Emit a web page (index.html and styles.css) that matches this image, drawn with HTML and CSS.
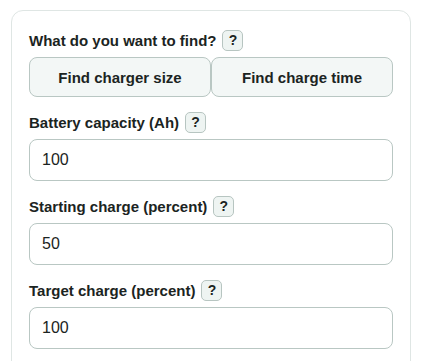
FILE: index.html
```html
<!DOCTYPE html>
<html lang="en">
  <head>
    <meta charset="UTF-8" />
    <meta name="viewport" content="width=device-width, initial-scale=1.0" />
    <title>Battery charger calculator</title>
    <link rel="stylesheet" href="styles.css">
  </head>
  <body>
    <div class="calc-card">
      <div class="label-row">
        <span class="label">What do you want to find?</span>
        <button class="help">?</button>
      </div>
      <div class="mode-buttons">
        <button class="mode">Find charger size</button>
        <button class="mode">Find charge time</button>
      </div>

      <div class="field">
        <div class="label-row">
          <label class="label" for="capacity">Battery capacity (Ah)</label>
          <button class="help">?</button>
        </div>
        <input class="num-input" id="capacity" type="text" value="100" />
      </div>

      <div class="field">
        <div class="label-row">
          <label class="label" for="start">Starting charge (percent)</label>
          <button class="help">?</button>
        </div>
        <input class="num-input" id="start" type="text" value="50" />
      </div>

      <div class="field">
        <div class="label-row">
          <label class="label" for="target">Target charge (percent)</label>
          <button class="help">?</button>
        </div>
        <input class="num-input" id="target" type="text" value="100" />
      </div>
    </div>
  </body>
</html>
```

FILE: styles.css
```css
* {
  box-sizing: border-box;
}

body {
  margin: 0;
  font-family: "Liberation Sans", Arial, sans-serif;
  background: #ffffff;
  color: #1b2422;
}

.calc-card {
  width: 400px;
  margin: 10px 0 0 11px;
  padding: 18px 17px 40px 17px;
  border: 1px solid #dfe6e4;
  border-radius: 12px;
}

.label-row {
  display: flex;
  align-items: center;
  gap: 6px;
  height: 22px;
}

.label {
  font-size: 15px;
  font-weight: 700;
}

.help {
  width: 21px;
  height: 21px;
  padding: 0;
  border: 1px solid #b7c5c1;
  border-radius: 5px;
  background: #eef4f2;
  color: #1b2422;
  font-family: inherit;
  font-size: 14px;
  font-weight: 700;
  cursor: pointer;
}

.mode-buttons {
  display: flex;
  margin-top: 6px;
}

.mode {
  flex: 1;
  height: 40px;
  border: 1px solid #b9c7c3;
  border-radius: 8px;
  background: #f3f7f6;
  color: #1b2422;
  font-family: inherit;
  font-size: 15px;
  font-weight: 700;
  cursor: pointer;
}

.field {
  margin-top: 14px;
}

.num-input {
  display: block;
  width: 100%;
  height: 42px;
  margin-top: 6px;
  padding: 0 12px;
  border: 1px solid #b9c7c3;
  border-radius: 8px;
  background: #ffffff;
  color: #1b2422;
  font-family: inherit;
  font-size: 16px;
}
```
